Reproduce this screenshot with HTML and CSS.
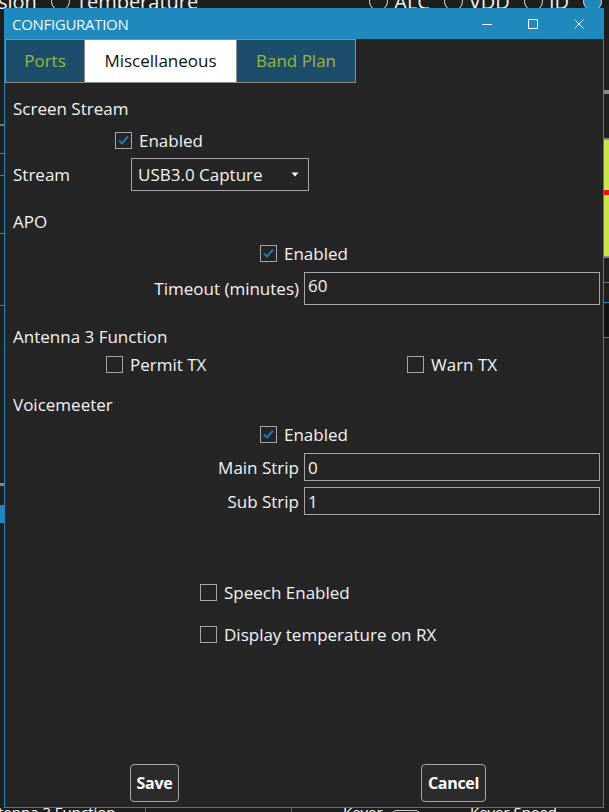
FILE: index.html
```html
<!DOCTYPE html>
<html>
<head>
<meta charset="utf-8">
<link rel="stylesheet" href="styles.css">
</head>
<body>
<div class="desk">
  <div class="desk-top">
    <span class="dt-sion">sion</span><span class="radio"></span><span>Temperature</span>
    <span class="dt-right"><span class="radio"></span><span>ALC</span><span class="radio"></span><span>VDD</span><span class="radio"></span><span>ID</span><span class="radio on"></span></span>
  </div>
  <div class="desk-left">
    <span class="dl dl1"></span><span class="dl dl2"></span><span class="dl dl3"></span><span class="dl dl4"></span><span class="dl dlblue"></span><span class="dl dl5"></span><span class="dl dlblock"></span>
  </div>
  <div class="desk-right">
    <span class="dr dr-top"></span><span class="dr-meter"><span class="dr-red"></span></span><span class="dr dr2"></span><span class="dr dr-blue"></span><span class="dr dr-dark"></span><span class="dr dr-blue2"></span>
  </div>
  <div class="desk-bottom">
    <span class="db-a">tenna 3 Function</span><span class="db-line"></span><span class="db-line2"></span><span class="db-k">Keyer</span><span class="db-toggle"></span><span class="db-ks">Keyer Speed</span><span class="db-blue"></span>
  </div>
</div>

<div class="window">
  <div class="titlebar">
    <span class="title">CONFIGURATION</span>
    <div class="wctl">
      <svg width="12" height="12" viewBox="0 0 12 12"><path d="M1 6.5H11" stroke="#fff" stroke-width="1"/></svg>
      <svg width="12" height="12" viewBox="0 0 12 12"><rect x="1.5" y="1.5" width="9" height="9" fill="none" stroke="#fff" stroke-width="1"/></svg>
      <svg width="12" height="12" viewBox="0 0 12 12"><path d="M1.5 1.5L10.5 10.5M10.5 1.5L1.5 10.5" stroke="#fff" stroke-width="1"/></svg>
    </div>
  </div>
  <div class="tabs">
    <div class="tab tab-ports">Ports</div>
    <div class="tab tab-misc active">Miscellaneous</div>
    <div class="tab tab-band">Band Plan</div>
  </div>
  <div class="content">
    <div class="sect">Screen Stream</div>
    <div class="cbrow ind-ss mt11"><span class="cb checked"><svg width="17" height="17" viewBox="0 0 17 17"><path d="M4 8.5L7 11.5L13 4.5" fill="none" stroke="#1b79b0" stroke-width="2.2"/></svg></span><span>Enabled</span></div>
    <div class="streamrow">
      <span class="lbl-stream">Stream</span>
      <div class="select"><span>USB3.0 Capture</span><svg width="8" height="5" viewBox="0 0 8 5"><path d="M0.5 0.5H7.5L4 4.5Z" fill="#fff"/></svg></div>
    </div>
    <div class="sect mt19">APO</div>
    <div class="cbrow ind-260 mt11"><span class="cb checked"><svg width="17" height="17" viewBox="0 0 17 17"><path d="M4 8.5L7 11.5L13 4.5" fill="none" stroke="#1b79b0" stroke-width="2.2"/></svg></span><span>Enabled</span></div>
    <div class="field tall mt10"><span class="flabel">Timeout (minutes)</span><div class="input top">60</div></div>
    <div class="sect mt20">Antenna 3 Function</div>
    <div class="cbrow2 mt7">
      <div class="cbrow ind-permit"><span class="cb"></span><span>Permit TX</span></div>
      <div class="cbrow ind-warn"><span class="cb"></span><span>Warn TX</span></div>
    </div>
    <div class="sect mt20">Voicemeeter</div>
    <div class="cbrow ind-260 mt9"><span class="cb checked"><svg width="17" height="17" viewBox="0 0 17 17"><path d="M4 8.5L7 11.5L13 4.5" fill="none" stroke="#1b79b0" stroke-width="2.2"/></svg></span><span>Enabled</span></div>
    <div class="field mt10"><span class="flabel">Main Strip</span><div class="input">0</div></div>
    <div class="field mt6"><span class="flabel">Sub Strip</span><div class="input">1</div></div>
    <div class="cbrow ind-200 mt69"><span class="cb"></span><span>Speech Enabled</span></div>
    <div class="cbrow ind-200 mt25"><span class="cb"></span><span>Display temperature on RX</span></div>
    <div class="footer">
      <div class="fcol"><button class="btn">Save</button></div>
      <div class="fcol"><button class="btn">Cancel</button></div>
    </div>
  </div>
</div>
</body>
</html>
```
FILE: styles.css
```css
html, body {
  margin: 0;
  padding: 0;
}
body {
  width: 609px;
  height: 812px;
  overflow: hidden;
  position: relative;
  background: #1e1e1e;
  font-family: "Open Sans", "Noto Sans", sans-serif;
  color: #f4f4f4;
}
.desk {
  position: absolute;
  inset: 0;
}
.desk-top {
  position: absolute;
  left: -2px;
  top: -12px;
  display: flex;
  align-items: center;
  gap: 6px;
  font-size: 20px;
  white-space: nowrap;
  width: 610px;
}
.desk-top .radio {
  width: 17px;
  height: 17px;
  border: 1.5px solid #e0e0e0;
  border-radius: 50%;
  display: inline-block;
  margin-left: 8px;
}
.desk-top .radio.on {
  background: #1f87bb;
  border-color: #ddd;
}
.dt-right {
  margin-left: auto;
  display: flex;
  align-items: center;
  gap: 6px;
  padding-right: 6px;
}
.desk-left {
  position: absolute;
  left: 0;
  top: 0;
  width: 4px;
  height: 812px;
}
.dl {
  position: absolute;
  left: 0;
  width: 4px;
  height: 1px;
  background: #777;
}
.dl1 { top: 124px; height: 2px; }
.dl2 { top: 153px; }
.dl3 { top: 175px; }
.dl4 { top: 233px; }
.dlblue { top: 305px; background: #1f87bb; }
.dl5 { top: 483px; height: 3px; background: #888; }
.dlblock { top: 505px; height: 18px; background: #1f87bb; }
.desk-right {
  position: absolute;
  left: 604px;
  top: 0;
  width: 5px;
  height: 812px;
}
.dr {
  position: absolute;
  left: 0;
  width: 5px;
  height: 1px;
  background: #777;
}
.dr-top { top: 90px; height: 4px; background: #888; }
.dr-meter {
  position: absolute;
  left: 0;
  top: 138px;
  width: 5px;
  height: 116px;
  background: #c8e64a;
  border-bottom: 2px solid #888;
  border-top: 2px solid #888;
}
.dr-red {
  position: absolute;
  left: 0;
  top: 50px;
  width: 5px;
  height: 5px;
  background: #e8141b;
}
.dr2 { top: 282px; }
.dr-blue { top: 302px; background: #1f87bb; }
.dr-dark { top: 303px; height: 34px; background: #121212; }
.dr-blue2 { top: 337px; background: #1f87bb; }
.desk-bottom {
  position: absolute;
  left: 0;
  top: 802px;
  width: 609px;
  height: 20px;
  display: flex;
  align-items: flex-start;
  font-size: 15px;
  color: #fff;
  white-space: nowrap;
}
.db-a { margin-left: -2px; }
.db-line { position: absolute; left: 145px; top: 6px; width: 1px; height: 14px; background: #666; }
.db-line2 { position: absolute; left: 291px; top: 6px; width: 1px; height: 14px; background: #666; }
.db-k { position: absolute; left: 343px; }
.db-toggle { position: absolute; left: 390px; top: 8px; width: 30px; height: 12px; border: 1.5px solid #ccc; border-radius: 8px; }
.db-ks { position: absolute; left: 470px; }
.db-blue { position: absolute; left: 583px; top: 10px; width: 6px; height: 10px; background: #1f87bb; }

.window {
  position: absolute;
  left: 4px;
  top: 8px;
  width: 598px;
  height: 799px;
  border: 1px solid #1f87bb;
  border-top: none;
  background: #252525;
  display: flex;
  flex-direction: column;
}
.titlebar {
  height: 31px;
  background: #1f89bd;
  display: flex;
  align-items: center;
  padding-left: 8px;
  flex-shrink: 0;
  margin: 0 -1px;
}
.title {
  font-size: 15px;
  color: #f4f8fb;
  letter-spacing: -0.3px;
  padding-top: 1px;
}
.wctl {
  margin-left: auto;
  display: flex;
  align-items: center;
  gap: 34px;
  padding-right: 19px;
}
.tabs {
  display: flex;
  height: 44px;
  flex-shrink: 0;
}
.tab {
  box-sizing: border-box;
  height: 44px;
  display: flex;
  align-items: center;
  justify-content: center;
  font-size: 17px;
  color: #9db63d;
  background: #1c4e6c;
  border: 1px solid #8a8a8a;
  border-left: none;
  padding-bottom: 2px;
}
.tab-ports { width: 80px; border-left: 1px solid #8a8a8a; }
.tab-misc { width: 152px; }
.tab-band { width: 119px; }
.tab.active {
  background: #ffffff;
  color: #111;
}
.content {
  flex: 1;
  display: flex;
  flex-direction: column;
  padding-top: 14px;
  font-size: 17px;
}
.sect {
  height: 24px;
  line-height: 24px;
  padding-left: 8px;
}
.cbrow {
  display: flex;
  align-items: center;
  height: 17px;
  gap: 7px;
  white-space: nowrap;
}
.cb {
  box-sizing: border-box;
  width: 17px;
  height: 17px;
  border: 1px solid #a6a6a6;
  flex-shrink: 0;
  position: relative;
}
.cb svg {
  position: absolute;
  left: -1px;
  top: -1px;
}
.ind-ss { padding-left: 110px; }
.ind-260 { padding-left: 255px; }
.ind-200 { padding-left: 195px; }
.cbrow2 {
  display: flex;
  height: 17px;
}
.ind-permit { padding-left: 101px; width: 200px; }
.ind-warn { padding-left: 101px; }
.streamrow {
  display: flex;
  align-items: center;
  height: 33px;
  margin-top: 9px;
  padding-left: 8px;
}
.lbl-stream { width: 118px; }
.select {
  box-sizing: border-box;
  width: 178px;
  height: 33px;
  border: 1px solid #a6a6a6;
  display: flex;
  align-items: center;
  padding: 0 9px 0 6px;
  justify-content: space-between;
}
.field {
  display: grid;
  grid-template-columns: 1fr 296px;
  column-gap: 5px;
  height: 28px;
  padding-right: 3px;
}
.field.tall { height: 33px; }
.flabel {
  text-align: right;
  align-self: center;
  white-space: nowrap;
}
.input {
  box-sizing: border-box;
  border: 1px solid #a6a6a6;
  height: 100%;
  display: flex;
  align-items: center;
  padding-left: 3px;
}
.input.top {
  align-items: flex-start;
  padding-top: 1px;
}
.mt6 { margin-top: 6px; }
.mt7 { margin-top: 7px; }
.mt9 { margin-top: 9px; }
.mt10 { margin-top: 10px; }
.mt11 { margin-top: 11px; }
.mt19 { margin-top: 19px; }
.mt20 { margin-top: 20px; }
.mt25 { margin-top: 25px; }
.mt69 { margin-top: 69px; }
.footer {
  margin-top: auto;
  display: grid;
  grid-template-columns: 1fr 1fr;
  padding-bottom: 5px;
}
.fcol {
  display: flex;
  justify-content: center;
}
.btn {
  height: 38px;
  padding: 0 6px;
  background: #2b2b2b;
  border: 1px solid #a6a6a6;
  border-radius: 4px;
  color: #fff;
  font-family: "Open Sans", "Noto Sans", sans-serif;
  font-weight: 700;
  font-size: 16px;
  letter-spacing: -0.3px;
}
```
